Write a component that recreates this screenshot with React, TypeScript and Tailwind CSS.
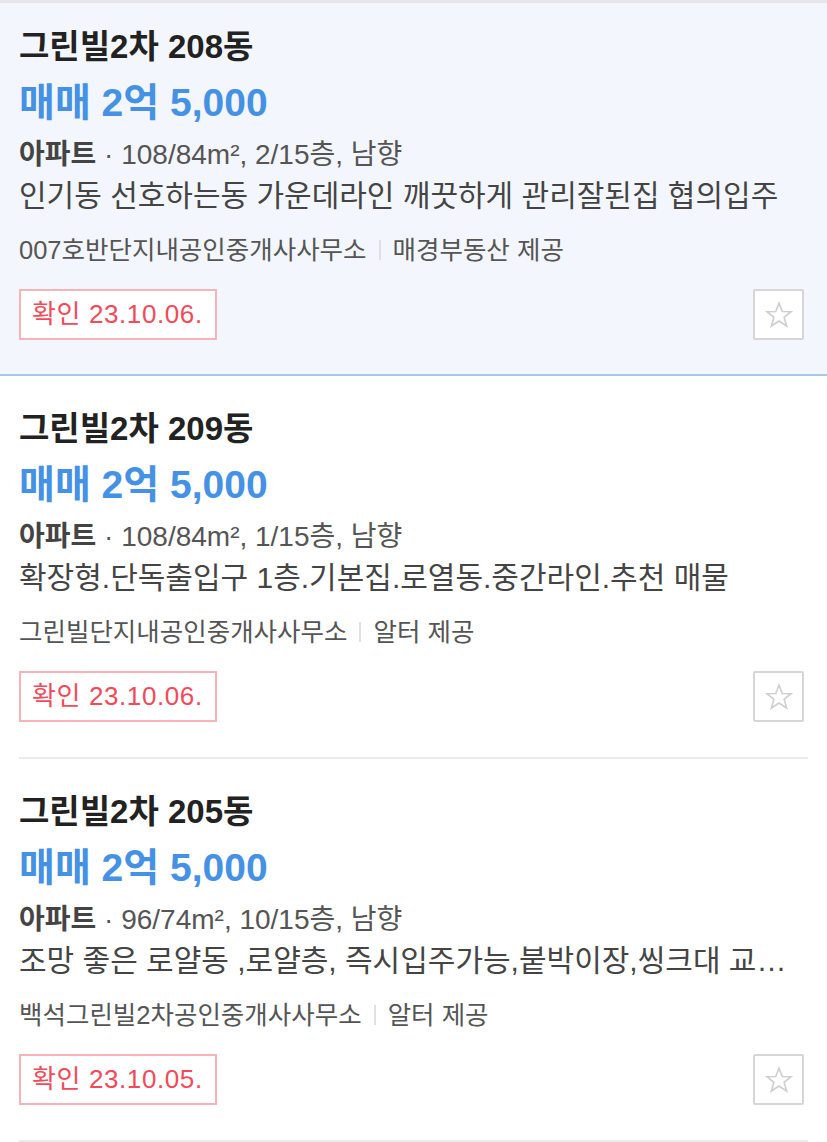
import type { ReactNode } from "react";

interface Listing {
  title: string;
  price: string;
  spec: string;
  desc: string;
  agency: string;
  provider: string;
  confirmed: string;
}

const listings: Listing[] = [
  {
    title: "그린빌2차 208동",
    price: "매매 2억 5,000",
    spec: "108/84m², 2/15층, 남향",
    desc: "인기동 선호하는동 가운데라인 깨끗하게 관리잘된집 협의입주",
    agency: "007호반단지내공인중개사사무소",
    provider: "매경부동산 제공",
    confirmed: "23.10.06.",
  },
  {
    title: "그린빌2차 209동",
    price: "매매 2억 5,000",
    spec: "108/84m², 1/15층, 남향",
    desc: "확장형.단독출입구 1층.기본집.로열동.중간라인.추천 매물",
    agency: "그린빌단지내공인중개사사무소",
    provider: "알터 제공",
    confirmed: "23.10.06.",
  },
  {
    title: "그린빌2차 205동",
    price: "매매 2억 5,000",
    spec: "96/74m², 10/15층, 남향",
    desc: "조망 좋은 로얄동 ,로얄층, 즉시입주가능,붙박이장,씽크대 교체,도배장판",
    agency: "백석그린빌2차공인중개사사무소",
    provider: "알터 제공",
    confirmed: "23.10.05.",
  },
];

function StarButton() {
  return (
    <button
      type="button"
      aria-label="관심매물"
      className="flex h-[51px] w-[51px] items-center justify-center rounded-[2px] border-2 border-[#d6d6d6] bg-white"
    >
      <svg width="30" height="30" viewBox="0 0 24 24" fill="none" stroke="#cfcfcf" strokeWidth="1.3" strokeLinejoin="miter">
        <polygon points="12,2.5 14.6,9.2 21.6,9.4 16.1,13.8 18.1,20.8 12,16.8 5.9,20.8 7.9,13.8 2.4,9.4 9.4,9.2" />
      </svg>
    </button>
  );
}

function ListingBody({ item }: { item: Listing }) {
  return (
    <>
      <h2 className="text-[33px] font-bold leading-[40px] text-[#222]">{item.title}</h2>
      <p className="mt-[12px] text-[39px] font-bold leading-[48px] text-[#4591e6]">{item.price}</p>
      <p className="mt-[10px] text-[28px] leading-[36px] text-[#555]">
        <span className="font-bold text-[#444]">아파트</span> · {item.spec}
      </p>
      <p className="mt-[4px] truncate pr-[10px] text-[30px] leading-[38px] text-[#444]">{item.desc}</p>
      <p className="mt-[19px] flex items-center text-[25.5px] leading-[32px] text-[#555]">
        <span>{item.agency}</span>
        <span className="mx-[12px] h-[20px] w-[2px] bg-[#e0e0e0]" />
        <span>{item.provider}</span>
      </p>
      <div className="mt-[23px] flex items-center justify-between pr-[4px]">
        <span className="flex h-[51px] items-center border-2 border-[#f8b3b9] bg-white pl-[11px] pr-[12px] text-[26px] tracking-[0.6px] text-[#f24a5a]">
          확인 {item.confirmed}
        </span>
        <StarButton />
      </div>
    </>
  );
}

function Card({ children, selected }: { children: ReactNode; selected?: boolean }) {
  if (selected) {
    return (
      <article className="border-b-2 border-[#a5c6ef] bg-[#f3f7fd] px-[19px] pb-[34px] pt-[24px]">{children}</article>
    );
  }
  return (
    <article className="px-[19px]">
      <div className="border-b-2 border-[#ebebeb] pb-[35px] pt-[33px]">{children}</div>
    </article>
  );
}

export default function App() {
  return (
    <div
      className="h-[1142px] w-[827px] overflow-hidden border-t-[3px] border-[#e4e6ea] bg-white"
      style={{ fontFamily: '"Liberation Sans", "Noto Sans CJK KR", sans-serif' }}
    >
      {listings.map((item, i) => (
        <Card key={item.title} selected={i === 0}>
          <ListingBody item={item} />
        </Card>
      ))}
    </div>
  );
}
